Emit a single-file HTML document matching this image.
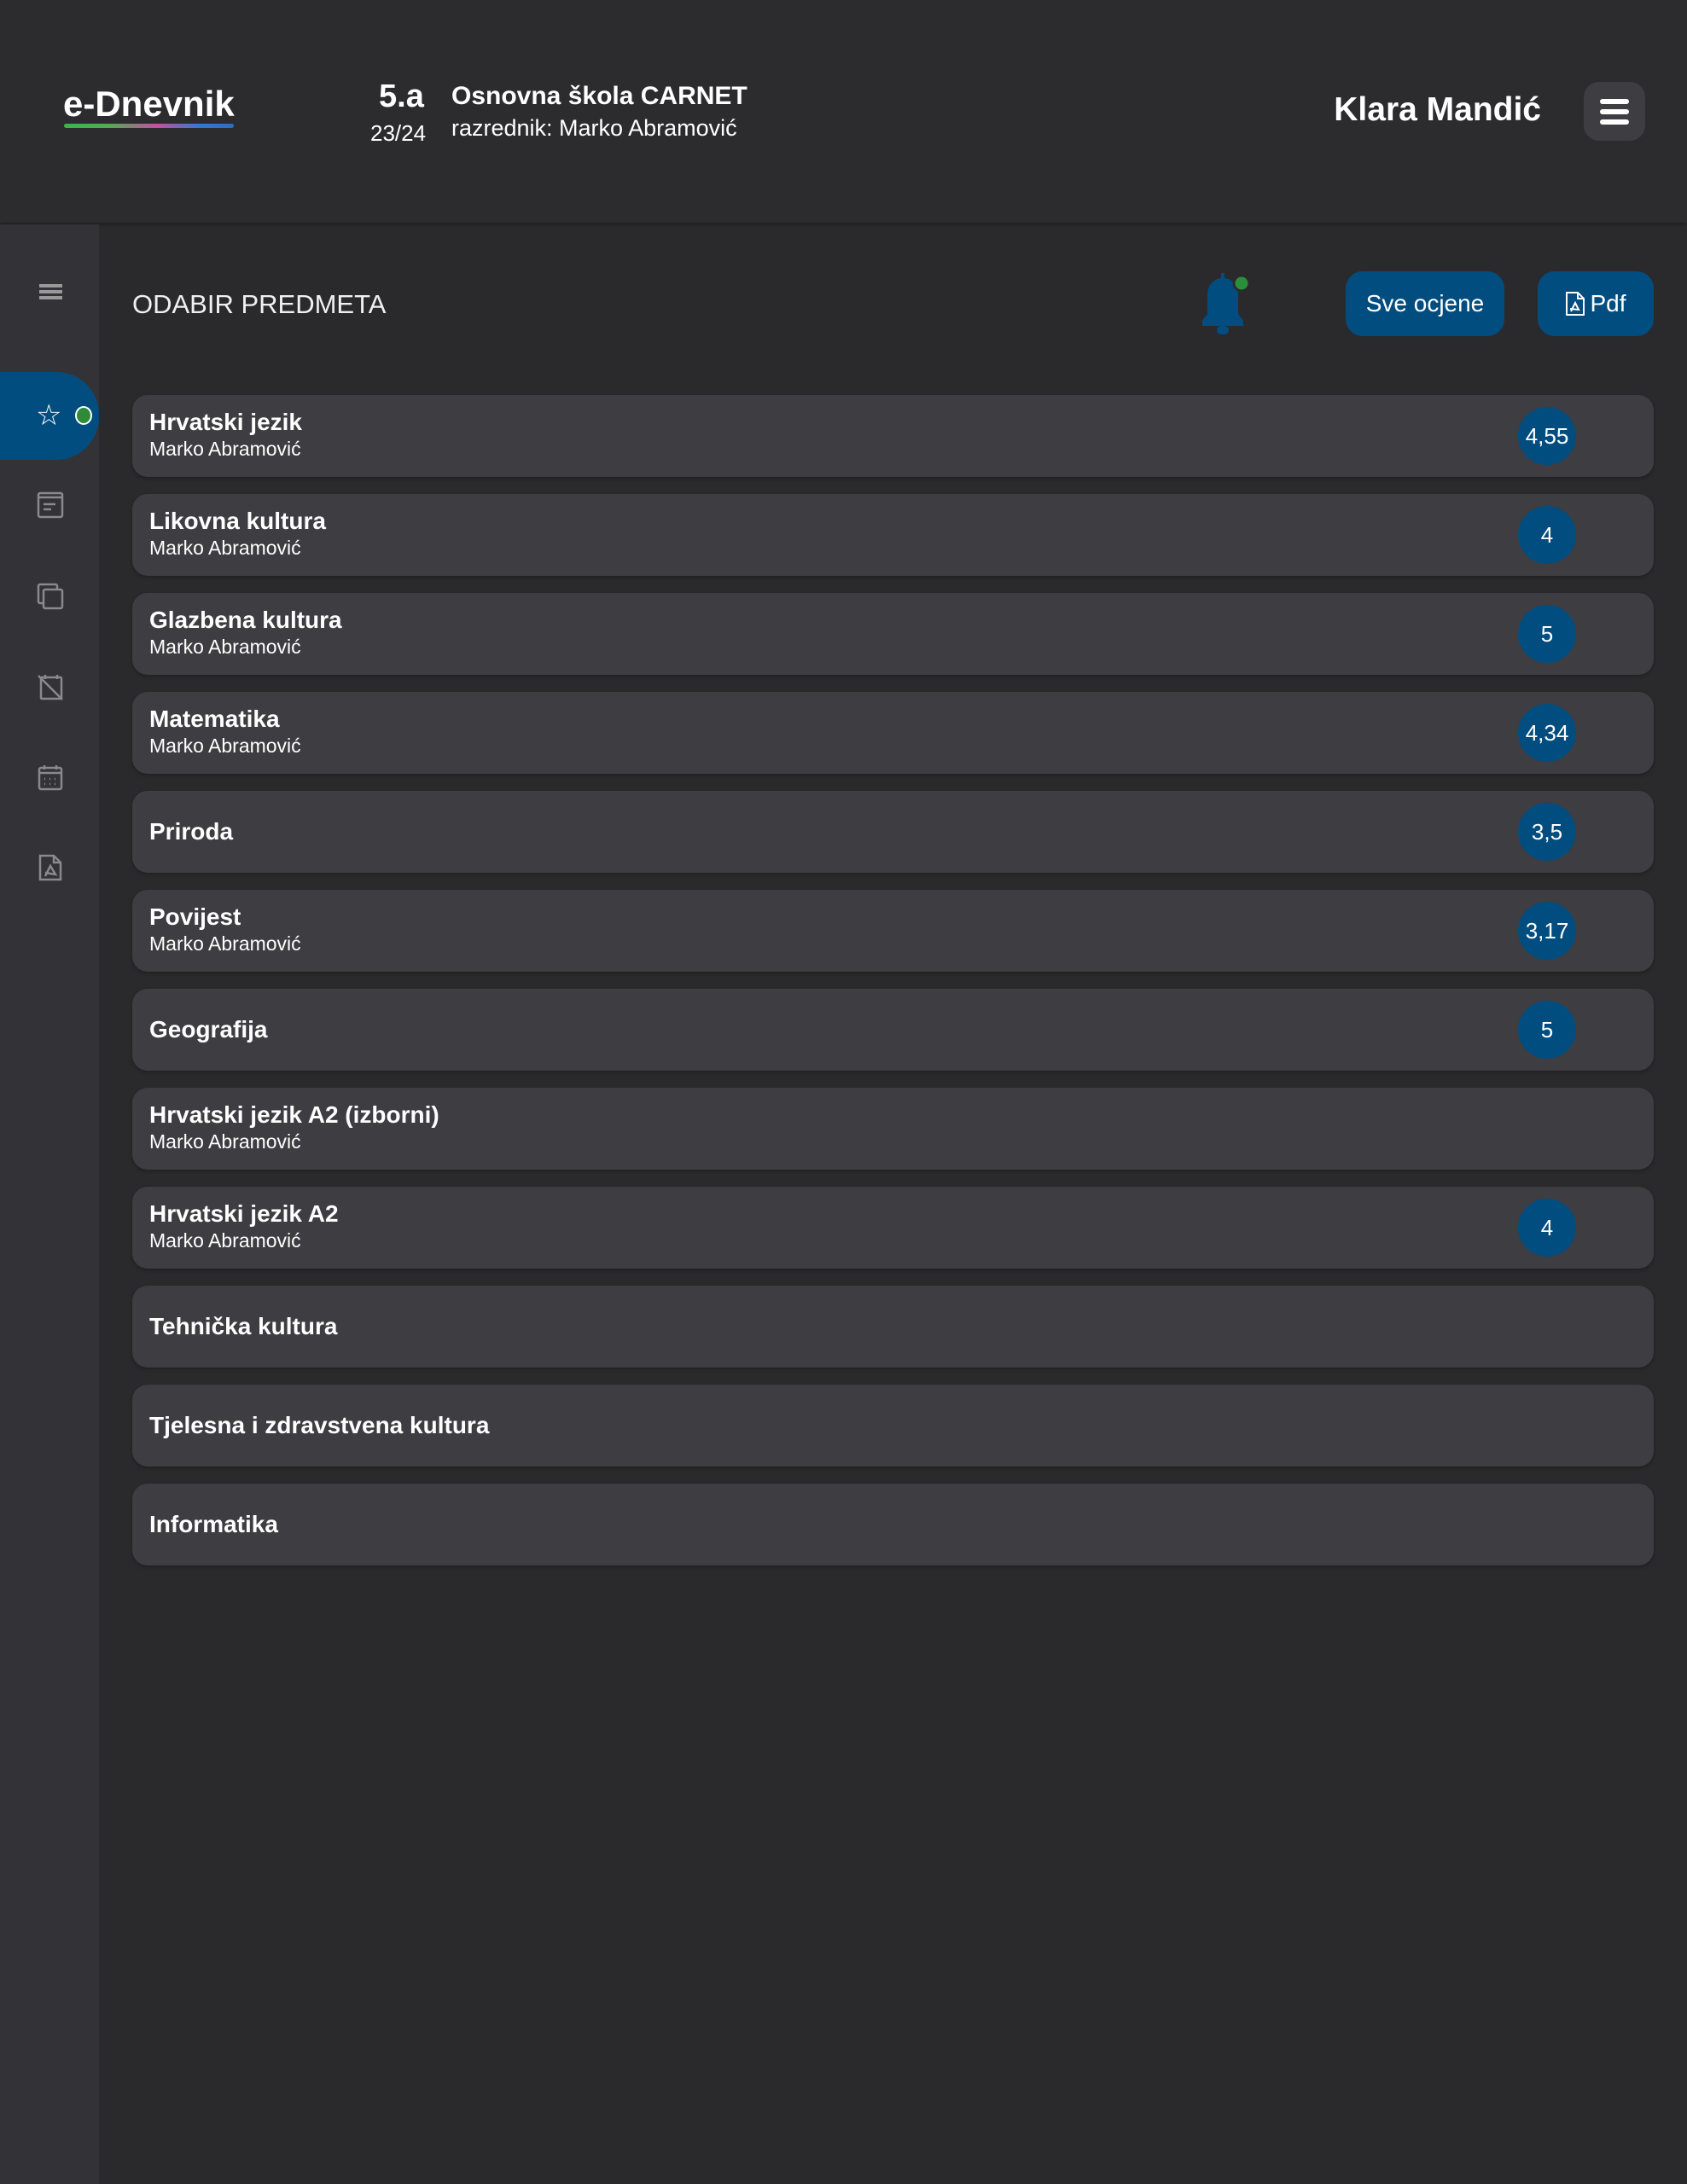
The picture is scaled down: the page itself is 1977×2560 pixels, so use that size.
<!DOCTYPE html>
<html><head><meta charset="utf-8"><style>
*{margin:0;padding:0;box-sizing:border-box}
body{width:1977px;height:2560px;background:#2a2a2d;font-family:"Liberation Sans",sans-serif;color:#fff;position:relative;overflow:hidden}
.hdr{position:absolute;left:0;top:0;width:1977px;height:261px;background:#2c2c2f;box-shadow:0 2px 4px rgba(0,0,0,.3)}
.side{position:absolute;left:0;top:263px;width:116px;height:2297px;background:#333337}
.abs{position:absolute;white-space:nowrap}
.card{position:absolute;left:155px;width:1783px;height:96px;background:#3d3d42;border-radius:18px;box-shadow:0 2px 4px rgba(0,0,0,.25)}
.card .t{position:absolute;left:20px;font-weight:bold;font-size:28px}
.card .s{position:absolute;left:20px;top:50px;font-size:23px}
.badge{position:absolute;left:1624px;top:14px;width:68px;height:68px;border-radius:50%;background:#014d80;font-size:26px;display:flex;align-items:center;justify-content:center}
.btn{position:absolute;top:318px;height:76px;background:#014d80;border-radius:20px;font-size:28px;display:flex;align-items:center;justify-content:center}
.ic{position:absolute;left:43px}
</style></head><body>
<div class="hdr"></div>
<div class="abs" style="left:74px;top:98px;font-size:42px;font-weight:bold">e-Dnevnik</div>
<div class="abs" style="left:75px;top:145px;width:199px;height:5px;border-radius:3px;background:linear-gradient(90deg,#3bb54a,#4caf50 25%,#c44fa0 55%,#2f7ad1 80%,#2a6fbf)"></div>
<div class="abs" style="left:444px;top:92px;font-size:38px;font-weight:bold">5.a</div>
<div class="abs" style="left:434px;top:141px;font-size:26px">23/24</div>
<div class="abs" style="left:529px;top:96px;font-size:30px;font-weight:bold">Osnovna škola CARNET</div>
<div class="abs" style="left:529px;top:135px;font-size:27px">razrednik: Marko Abramović</div>
<div class="abs" style="right:171px;top:107px;font-size:39px;font-weight:bold">Klara Mandić</div>
<div class="abs" style="left:1856px;top:96px;width:72px;height:69px;background:#3d3d42;border-radius:18px">
<div style="position:absolute;left:19px;top:20px;width:34px;height:6px;background:#fff;border-radius:3px"></div>
<div style="position:absolute;left:19px;top:32px;width:34px;height:6px;background:#fff;border-radius:3px"></div>
<div style="position:absolute;left:19px;top:44px;width:34px;height:6px;background:#fff;border-radius:3px"></div></div>
<div class="side"></div>
<div class="abs" style="left:46px;top:333px;width:27px;height:4px;background:#999;box-shadow:0 7px 0 #999,0 14px 0 #999"></div>
<div class="abs" style="left:0;top:436px;width:116px;height:103px;background:#014d80;border-radius:0 50px 50px 0"></div>
<div class="abs" style="left:42px;top:467px;font-size:34px;color:#fff">☆</div>
<div class="abs" style="left:88px;top:476px;width:20px;height:22px;border-radius:50%;background:#2e8b3a;border:2px solid #fff"></div>
<svg class="ic" style="top:576px" width="32" height="32" viewBox="0 0 32 32" fill="none" stroke="#8a8a8e" stroke-width="2.5"><rect x="2" y="2" width="28" height="28" rx="2"/><line x1="2" y1="7" x2="30" y2="7"/><line x1="8" y1="15" x2="22" y2="15"/><line x1="8" y1="21" x2="17" y2="21"/></svg>
<svg class="ic" style="top:683px" width="32" height="32" viewBox="0 0 32 32" fill="none" stroke="#8a8a8e" stroke-width="2.5"><rect x="8" y="8" width="22" height="22" rx="2"/><path d="M8 24H4a2 2 0 0 1-2-2V4a2 2 0 0 1 2-2h18a2 2 0 0 1 2 2v4"/></svg>
<svg class="ic" style="top:789px" width="32" height="32" viewBox="0 0 32 32" fill="none" stroke="#8a8a8e" stroke-width="2.5"><rect x="5" y="5" width="24" height="25" rx="1"/><line x1="10" y1="2" x2="10" y2="7"/><line x1="24" y1="2" x2="24" y2="7"/><line x1="2" y1="3" x2="30" y2="31"/></svg>
<svg class="ic" style="top:895px" width="32" height="32" viewBox="0 0 32 32" fill="none" stroke="#8a8a8e" stroke-width="2.5"><rect x="3" y="5" width="26" height="25" rx="2"/><line x1="3" y1="11" x2="29" y2="11"/><line x1="9" y1="2" x2="9" y2="7"/><line x1="23" y1="2" x2="23" y2="7"/><path d="M9 18h1M15 18h1M21 18h1M9 24h1M15 24h1M21 24h1"/></svg>
<svg class="ic" style="top:1001px" width="32" height="32" viewBox="0 0 32 32" fill="none" stroke="#8a8a8e" stroke-width="2.5"><path d="M4 2h16l8 8v20H4z"/><path d="M20 2v8h8"/><path d="M10 26l6-12 6 10-12-2"/></svg>
<div class="abs" style="left:155px;top:339px;font-size:31px;color:#f0f0f0">ODABIR PREDMETA</div>
<svg class="abs" style="left:1397px;top:316px" width="72" height="80" viewBox="0 0 72 80"><path d="M34 4h4v8h-4z" fill="#014d80"/><path d="M36 10c-12 0-18 9-18 20v22l-6 8v6h48v-6l-6-8V30c0-11-6-20-18-20z" fill="#014d80"/><rect x="29" y="66" width="14" height="10" rx="5" fill="#014d80"/><circle cx="58" cy="16" r="9" fill="#2a8f3a" stroke="#2a2a2d" stroke-width="3"/></svg>
<div class="btn" style="left:1577px;width:186px">Sve ocjene</div>
<div class="btn" style="left:1802px;width:136px"><svg width="24" height="30" viewBox="0 0 24 30" fill="none" stroke="#fff" stroke-width="2" style="margin-right:5px"><path d="M2 2h13l7 7v19H2z"/><path d="M15 2v7h7"/><path d="M7 24l5-10 4 8-10-1"/></svg>Pdf</div>

<div class="card" style="top:463px"><div class="t" style="top:16px">Hrvatski jezik</div><div class="s">Marko Abramović</div><div class="badge">4,55</div></div>
<div class="card" style="top:579px"><div class="t" style="top:16px">Likovna kultura</div><div class="s">Marko Abramović</div><div class="badge">4</div></div>
<div class="card" style="top:695px"><div class="t" style="top:16px">Glazbena kultura</div><div class="s">Marko Abramović</div><div class="badge">5</div></div>
<div class="card" style="top:811px"><div class="t" style="top:16px">Matematika</div><div class="s">Marko Abramović</div><div class="badge">4,34</div></div>
<div class="card" style="top:927px"><div class="t" style="top:32px">Priroda</div><div class="badge">3,5</div></div>
<div class="card" style="top:1043px"><div class="t" style="top:16px">Povijest</div><div class="s">Marko Abramović</div><div class="badge">3,17</div></div>
<div class="card" style="top:1159px"><div class="t" style="top:32px">Geografija</div><div class="badge">5</div></div>
<div class="card" style="top:1275px"><div class="t" style="top:16px">Hrvatski jezik A2 (izborni)</div><div class="s">Marko Abramović</div></div>
<div class="card" style="top:1391px"><div class="t" style="top:16px">Hrvatski jezik A2</div><div class="s">Marko Abramović</div><div class="badge">4</div></div>
<div class="card" style="top:1507px"><div class="t" style="top:32px">Tehnička kultura</div></div>
<div class="card" style="top:1623px"><div class="t" style="top:32px">Tjelesna i zdravstvena kultura</div></div>
<div class="card" style="top:1739px"><div class="t" style="top:32px">Informatika</div></div>
</body></html>
